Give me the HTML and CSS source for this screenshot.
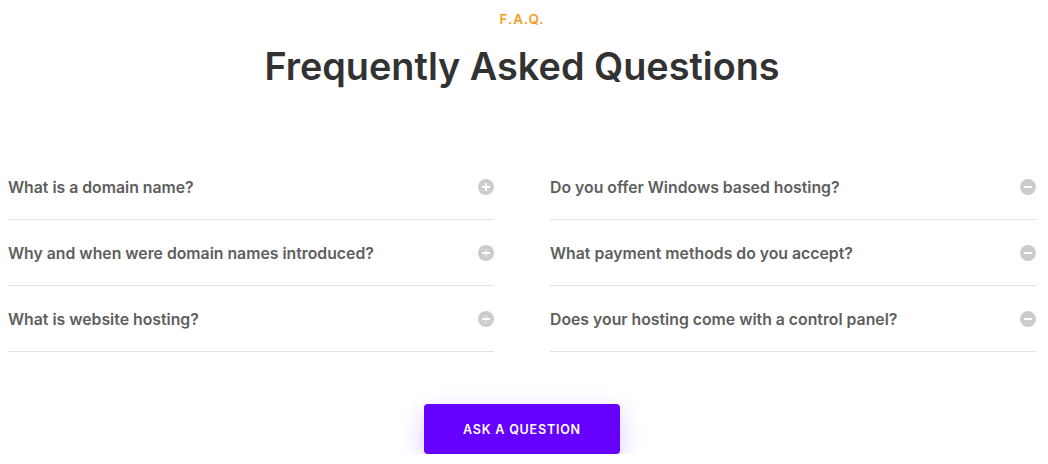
FILE: index.html
```html
<!DOCTYPE html>
<html lang="en">
<head>
    <meta charset="UTF-8">
    <meta name="viewport" content="width=device-width, initial-scale=1.0">
    <title>FAQ</title>
    <link rel="stylesheet" href="styles.css">
</head>
<body>
    <section class="faq">
        <div class="faq-header">
            <span class="eyebrow">F.A.Q.</span>
            <h1>Frequently Asked Questions</h1>
        </div>

        <div class="faq-grid">
            <div class="faq-col">
                <div class="faq-item">
                    <span class="question">What is a domain name?</span>
                    <span class="toggle plus"></span>
                </div>
                <div class="faq-item">
                    <span class="question">Why and when were domain names introduced?</span>
                    <span class="toggle plus faded"></span>
                </div>
                <div class="faq-item">
                    <span class="question">What is website hosting?</span>
                    <span class="toggle plus faded"></span>
                </div>
            </div>
            <div class="faq-col">
                <div class="faq-item">
                    <span class="question">Do you offer Windows based hosting?</span>
                    <span class="toggle"></span>
                </div>
                <div class="faq-item">
                    <span class="question">What payment methods do you accept?</span>
                    <span class="toggle"></span>
                </div>
                <div class="faq-item">
                    <span class="question">Does your hosting come with a control panel?</span>
                    <span class="toggle"></span>
                </div>
            </div>
        </div>

        <div class="faq-action">
            <button class="btn-primary">Ask a question</button>
        </div>
    </section>
</body>
</html>
```

FILE: styles.css
```css
:root {
    --accent: #f0a01e;
    --heading: #323232;
    --text: #5e5e5e;
    --line: #e3e3e3;
    --icon: #cccccc;
    --purple: #6600ff;
}

* {
    margin: 0;
    padding: 0;
    box-sizing: border-box;
}

body {
    font-family: 'Inter', 'Roboto', sans-serif;
    background: #ffffff;
    color: var(--text);
}

.faq {
    width: 1028px;
    margin-left: 8px;
    padding-top: 10px;
}

.faq-header {
    text-align: center;
}

.eyebrow {
    display: block;
    color: var(--accent);
    font-size: 13.5px;
    font-weight: 600;
    letter-spacing: 0.9px;
    line-height: 18px;
}

.faq-header h1 {
    color: var(--heading);
    font-size: 37.8px;
    font-weight: 600;
    line-height: 48px;
    margin-top: 14px;
}

.faq-grid {
    display: grid;
    grid-template-columns: 486px 486px;
    gap: 56px;
    margin-top: 64px;
}

.faq-item {
    display: flex;
    align-items: center;
    justify-content: space-between;
    height: 66px;
    border-bottom: 1px solid var(--line);
    padding-top: 1px;
}

.question {
    font-size: 15.8px;
    font-weight: 600;
    color: var(--text);
}

.toggle {
    position: relative;
    width: 16px;
    height: 16px;
    border-radius: 50%;
    background: var(--icon);
}

.toggle::before,
.toggle::after {
    content: '';
    position: absolute;
    background: #ffffff;
    left: 4px;
    top: 7px;
    width: 8px;
    height: 2px;
}

.toggle::after {
    display: none;
}

.toggle.plus::after {
    display: block;
    left: 7px;
    top: 4px;
    width: 2px;
    height: 8px;
}

.toggle.faded::after {
    opacity: 0.35;
}

.faq-action {
    display: flex;
    justify-content: center;
    margin-top: 52px;
}

.btn-primary {
    width: 196px;
    height: 50px;
    border: none;
    border-radius: 4px;
    background: var(--purple);
    color: #ffffff;
    font-family: inherit;
    font-size: 12.5px;
    font-weight: 600;
    letter-spacing: 0.8px;
    text-transform: uppercase;
    box-shadow: 0 8px 24px rgba(102, 0, 255, 0.22);
    cursor: pointer;
}
```
